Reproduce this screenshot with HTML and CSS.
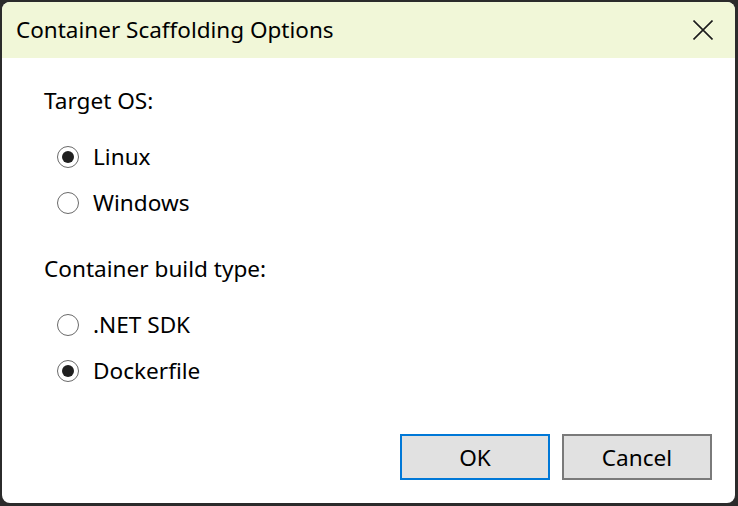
FILE: index.html
```html
<!DOCTYPE html>
<html lang="en">
<head>
<meta charset="utf-8">
<title>Container Scaffolding Options</title>
<link rel="stylesheet" href="styles.css">
</head>
<body>
<div class="window">
  <div class="titlebar">
    <span class="title">Container Scaffolding Options</span>
    <button class="close" aria-label="Close">
      <svg width="20" height="20" viewBox="0 0 20 20"><path d="M0.5 0.5 L19.5 19.5 M19.5 0.5 L0.5 19.5" stroke="#1c1c1c" stroke-width="1.6" fill="none"/></svg>
    </button>
  </div>
  <div class="content">
    <div class="label">Target OS:</div>
    <div class="group">
      <div class="radio-row"><span class="radio checked"></span><span>Linux</span></div>
      <div class="radio-row"><span class="radio"></span><span>Windows</span></div>
    </div>
    <div class="label second">Container build type:</div>
    <div class="group">
      <div class="radio-row"><span class="radio"></span><span>.NET SDK</span></div>
      <div class="radio-row"><span class="radio checked"></span><span>Dockerfile</span></div>
    </div>
    <div class="buttons">
      <button class="btn default">OK</button>
      <button class="btn">Cancel</button>
    </div>
  </div>
</div>
</body>
</html>
```
FILE: styles.css
```css
html, body {
  margin: 0;
  padding: 0;
  background: #2b2b2b;
}
body {
  padding: 2px 3px 3px 2px;
  font-family: "Noto Sans", "Open Sans", sans-serif;
  font-size: 22.6px;
  color: #000;
}
.window {
  width: 733px;
  height: 501px;
  background: #fff;
  border-radius: 8px;
  overflow: hidden;
  display: flex;
  flex-direction: column;
}
.titlebar {
  height: 56px;
  flex: none;
  background: #f1f7d8;
  display: flex;
  align-items: center;
  justify-content: space-between;
  padding-left: 14px;
}
.title {
  font-size: 22.5px;
  line-height: 30px;
}
.close {
  width: 46px;
  height: 56px;
  margin-right: 9px;
  border: none;
  background: transparent;
  padding: 0;
  display: flex;
  align-items: center;
  justify-content: center;
}
.content {
  flex: 1;
  display: flex;
  flex-direction: column;
  padding: 28px 23px 23px 42px;
}
.label {
  line-height: 30px;
  height: 30px;
}
.label.second {
  margin-top: 28px;
}
.group {
  margin-top: 18px;
  display: flex;
  flex-direction: column;
  padding-left: 13px;
}
.radio-row {
  height: 46px;
  display: flex;
  align-items: center;
  gap: 14px;
  line-height: 30px;
}
.radio {
  width: 22px;
  height: 22px;
  box-sizing: border-box;
  border: 1.7px solid #6a6a6a;
  border-radius: 50%;
  display: flex;
  align-items: center;
  justify-content: center;
  flex: none;
}
.radio.checked::after {
  content: "";
  width: 12px;
  height: 12px;
  border-radius: 50%;
  background: #1f1f1f;
}
.buttons {
  margin-top: auto;
  display: flex;
  justify-content: flex-end;
  gap: 12px;
}
.btn {
  width: 150px;
  height: 46px;
  box-sizing: border-box;
  background: #e1e1e1;
  border: 2px solid #7a7a7a;
  font-family: inherit;
  font-size: 22.6px;
  color: #000;
  padding: 0;
}
.btn.default {
  border-color: #0078d7;
}
```
